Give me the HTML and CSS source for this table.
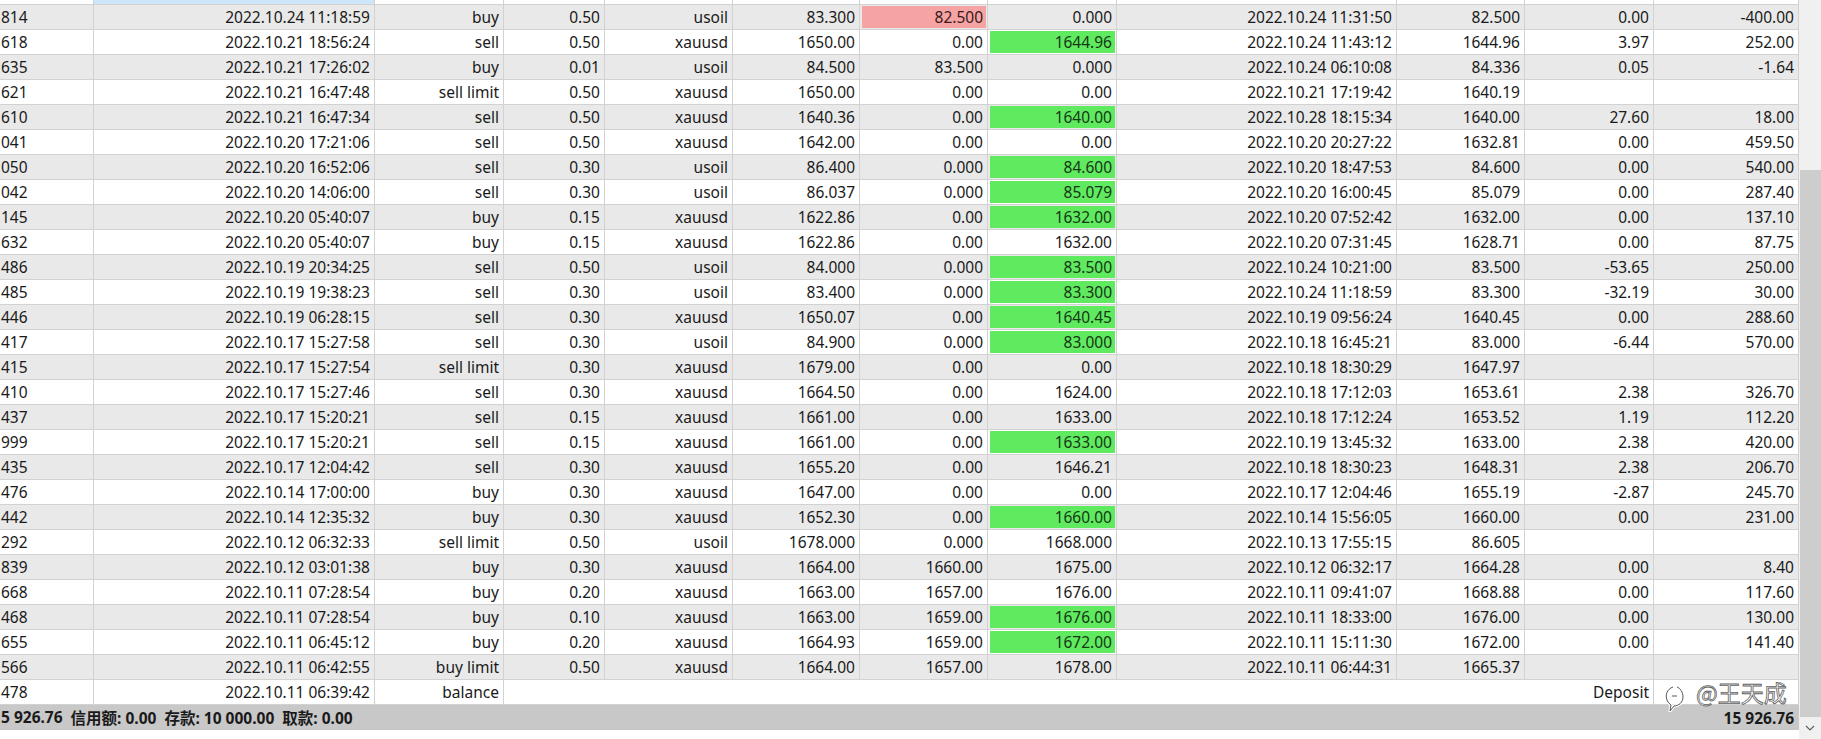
FILE: index.html
```html
<!DOCTYPE html>
<html>
<head>
<meta charset="utf-8">
<link rel="stylesheet" href="styles.css">
</head>
<body>
<div class="window">
  <div class="main">
    <div class="row head">
      <div class="c"></div><div class="c sel"></div><div class="c"></div><div class="c"></div><div class="c"></div><div class="c"></div><div class="c"></div><div class="c"></div><div class="c"></div><div class="c"></div><div class="c"></div><div class="c"></div>
    </div>
    <div class="row o"><div class="c t">814</div><div class="c">2022.10.24 11:18:59</div><div class="c">buy</div><div class="c">0.50</div><div class="c">usoil</div><div class="c">83.300</div><div class="c red">82.500</div><div class="c">0.000</div><div class="c">2022.10.24 11:31:50</div><div class="c">82.500</div><div class="c">0.00</div><div class="c">-400.00</div></div>
    <div class="row e"><div class="c t">618</div><div class="c">2022.10.21 18:56:24</div><div class="c">sell</div><div class="c">0.50</div><div class="c">xauusd</div><div class="c">1650.00</div><div class="c">0.00</div><div class="c grn">1644.96</div><div class="c">2022.10.24 11:43:12</div><div class="c">1644.96</div><div class="c">3.97</div><div class="c">252.00</div></div>
    <div class="row o"><div class="c t">635</div><div class="c">2022.10.21 17:26:02</div><div class="c">buy</div><div class="c">0.01</div><div class="c">usoil</div><div class="c">84.500</div><div class="c">83.500</div><div class="c">0.000</div><div class="c">2022.10.24 06:10:08</div><div class="c">84.336</div><div class="c">0.05</div><div class="c">-1.64</div></div>
    <div class="row e"><div class="c t">621</div><div class="c">2022.10.21 16:47:48</div><div class="c">sell limit</div><div class="c">0.50</div><div class="c">xauusd</div><div class="c">1650.00</div><div class="c">0.00</div><div class="c">0.00</div><div class="c">2022.10.21 17:19:42</div><div class="c">1640.19</div><div class="c"></div><div class="c"></div></div>
    <div class="row o"><div class="c t">610</div><div class="c">2022.10.21 16:47:34</div><div class="c">sell</div><div class="c">0.50</div><div class="c">xauusd</div><div class="c">1640.36</div><div class="c">0.00</div><div class="c grn">1640.00</div><div class="c">2022.10.28 18:15:34</div><div class="c">1640.00</div><div class="c">27.60</div><div class="c">18.00</div></div>
    <div class="row e"><div class="c t">041</div><div class="c">2022.10.20 17:21:06</div><div class="c">sell</div><div class="c">0.50</div><div class="c">xauusd</div><div class="c">1642.00</div><div class="c">0.00</div><div class="c">0.00</div><div class="c">2022.10.20 20:27:22</div><div class="c">1632.81</div><div class="c">0.00</div><div class="c">459.50</div></div>
    <div class="row o"><div class="c t">050</div><div class="c">2022.10.20 16:52:06</div><div class="c">sell</div><div class="c">0.30</div><div class="c">usoil</div><div class="c">86.400</div><div class="c">0.000</div><div class="c grn">84.600</div><div class="c">2022.10.20 18:47:53</div><div class="c">84.600</div><div class="c">0.00</div><div class="c">540.00</div></div>
    <div class="row e"><div class="c t">042</div><div class="c">2022.10.20 14:06:00</div><div class="c">sell</div><div class="c">0.30</div><div class="c">usoil</div><div class="c">86.037</div><div class="c">0.000</div><div class="c grn">85.079</div><div class="c">2022.10.20 16:00:45</div><div class="c">85.079</div><div class="c">0.00</div><div class="c">287.40</div></div>
    <div class="row o"><div class="c t">145</div><div class="c">2022.10.20 05:40:07</div><div class="c">buy</div><div class="c">0.15</div><div class="c">xauusd</div><div class="c">1622.86</div><div class="c">0.00</div><div class="c grn">1632.00</div><div class="c">2022.10.20 07:52:42</div><div class="c">1632.00</div><div class="c">0.00</div><div class="c">137.10</div></div>
    <div class="row e"><div class="c t">632</div><div class="c">2022.10.20 05:40:07</div><div class="c">buy</div><div class="c">0.15</div><div class="c">xauusd</div><div class="c">1622.86</div><div class="c">0.00</div><div class="c">1632.00</div><div class="c">2022.10.20 07:31:45</div><div class="c">1628.71</div><div class="c">0.00</div><div class="c">87.75</div></div>
    <div class="row o"><div class="c t">486</div><div class="c">2022.10.19 20:34:25</div><div class="c">sell</div><div class="c">0.50</div><div class="c">usoil</div><div class="c">84.000</div><div class="c">0.000</div><div class="c grn">83.500</div><div class="c">2022.10.24 10:21:00</div><div class="c">83.500</div><div class="c">-53.65</div><div class="c">250.00</div></div>
    <div class="row e"><div class="c t">485</div><div class="c">2022.10.19 19:38:23</div><div class="c">sell</div><div class="c">0.30</div><div class="c">usoil</div><div class="c">83.400</div><div class="c">0.000</div><div class="c grn">83.300</div><div class="c">2022.10.24 11:18:59</div><div class="c">83.300</div><div class="c">-32.19</div><div class="c">30.00</div></div>
    <div class="row o"><div class="c t">446</div><div class="c">2022.10.19 06:28:15</div><div class="c">sell</div><div class="c">0.30</div><div class="c">xauusd</div><div class="c">1650.07</div><div class="c">0.00</div><div class="c grn">1640.45</div><div class="c">2022.10.19 09:56:24</div><div class="c">1640.45</div><div class="c">0.00</div><div class="c">288.60</div></div>
    <div class="row e"><div class="c t">417</div><div class="c">2022.10.17 15:27:58</div><div class="c">sell</div><div class="c">0.30</div><div class="c">usoil</div><div class="c">84.900</div><div class="c">0.000</div><div class="c grn">83.000</div><div class="c">2022.10.18 16:45:21</div><div class="c">83.000</div><div class="c">-6.44</div><div class="c">570.00</div></div>
    <div class="row o"><div class="c t">415</div><div class="c">2022.10.17 15:27:54</div><div class="c">sell limit</div><div class="c">0.30</div><div class="c">xauusd</div><div class="c">1679.00</div><div class="c">0.00</div><div class="c">0.00</div><div class="c">2022.10.18 18:30:29</div><div class="c">1647.97</div><div class="c"></div><div class="c"></div></div>
    <div class="row e"><div class="c t">410</div><div class="c">2022.10.17 15:27:46</div><div class="c">sell</div><div class="c">0.30</div><div class="c">xauusd</div><div class="c">1664.50</div><div class="c">0.00</div><div class="c">1624.00</div><div class="c">2022.10.18 17:12:03</div><div class="c">1653.61</div><div class="c">2.38</div><div class="c">326.70</div></div>
    <div class="row o"><div class="c t">437</div><div class="c">2022.10.17 15:20:21</div><div class="c">sell</div><div class="c">0.15</div><div class="c">xauusd</div><div class="c">1661.00</div><div class="c">0.00</div><div class="c">1633.00</div><div class="c">2022.10.18 17:12:24</div><div class="c">1653.52</div><div class="c">1.19</div><div class="c">112.20</div></div>
    <div class="row e"><div class="c t">999</div><div class="c">2022.10.17 15:20:21</div><div class="c">sell</div><div class="c">0.15</div><div class="c">xauusd</div><div class="c">1661.00</div><div class="c">0.00</div><div class="c grn">1633.00</div><div class="c">2022.10.19 13:45:32</div><div class="c">1633.00</div><div class="c">2.38</div><div class="c">420.00</div></div>
    <div class="row o"><div class="c t">435</div><div class="c">2022.10.17 12:04:42</div><div class="c">sell</div><div class="c">0.30</div><div class="c">xauusd</div><div class="c">1655.20</div><div class="c">0.00</div><div class="c">1646.21</div><div class="c">2022.10.18 18:30:23</div><div class="c">1648.31</div><div class="c">2.38</div><div class="c">206.70</div></div>
    <div class="row e"><div class="c t">476</div><div class="c">2022.10.14 17:00:00</div><div class="c">buy</div><div class="c">0.30</div><div class="c">xauusd</div><div class="c">1647.00</div><div class="c">0.00</div><div class="c">0.00</div><div class="c">2022.10.17 12:04:46</div><div class="c">1655.19</div><div class="c">-2.87</div><div class="c">245.70</div></div>
    <div class="row o"><div class="c t">442</div><div class="c">2022.10.14 12:35:32</div><div class="c">buy</div><div class="c">0.30</div><div class="c">xauusd</div><div class="c">1652.30</div><div class="c">0.00</div><div class="c grn">1660.00</div><div class="c">2022.10.14 15:56:05</div><div class="c">1660.00</div><div class="c">0.00</div><div class="c">231.00</div></div>
    <div class="row e"><div class="c t">292</div><div class="c">2022.10.12 06:32:33</div><div class="c">sell limit</div><div class="c">0.50</div><div class="c">usoil</div><div class="c">1678.000</div><div class="c">0.000</div><div class="c">1668.000</div><div class="c">2022.10.13 17:55:15</div><div class="c">86.605</div><div class="c"></div><div class="c"></div></div>
    <div class="row o"><div class="c t">839</div><div class="c">2022.10.12 03:01:38</div><div class="c">buy</div><div class="c">0.30</div><div class="c">xauusd</div><div class="c">1664.00</div><div class="c">1660.00</div><div class="c">1675.00</div><div class="c">2022.10.12 06:32:17</div><div class="c">1664.28</div><div class="c">0.00</div><div class="c">8.40</div></div>
    <div class="row e"><div class="c t">668</div><div class="c">2022.10.11 07:28:54</div><div class="c">buy</div><div class="c">0.20</div><div class="c">xauusd</div><div class="c">1663.00</div><div class="c">1657.00</div><div class="c">1676.00</div><div class="c">2022.10.11 09:41:07</div><div class="c">1668.88</div><div class="c">0.00</div><div class="c">117.60</div></div>
    <div class="row o"><div class="c t">468</div><div class="c">2022.10.11 07:28:54</div><div class="c">buy</div><div class="c">0.10</div><div class="c">xauusd</div><div class="c">1663.00</div><div class="c">1659.00</div><div class="c grn">1676.00</div><div class="c">2022.10.11 18:33:00</div><div class="c">1676.00</div><div class="c">0.00</div><div class="c">130.00</div></div>
    <div class="row e"><div class="c t">655</div><div class="c">2022.10.11 06:45:12</div><div class="c">buy</div><div class="c">0.20</div><div class="c">xauusd</div><div class="c">1664.93</div><div class="c">1659.00</div><div class="c grn">1672.00</div><div class="c">2022.10.11 15:11:30</div><div class="c">1672.00</div><div class="c">0.00</div><div class="c">141.40</div></div>
    <div class="row o"><div class="c t">566</div><div class="c">2022.10.11 06:42:55</div><div class="c">buy limit</div><div class="c">0.50</div><div class="c">xauusd</div><div class="c">1664.00</div><div class="c">1657.00</div><div class="c">1678.00</div><div class="c">2022.10.11 06:44:31</div><div class="c">1665.37</div><div class="c"></div><div class="c"></div></div>
    <div class="row e"><div class="c t">478</div><div class="c">2022.10.11 06:39:42</div><div class="c">balance</div><div class="c span">Deposit</div><div class="c"></div></div>
    <div class="summary">
      <div class="sum-left"><span>5 926.76</span><span>信用额: 0.00</span><span>存款: 10 000.00</span><span>取款: 0.00</span></div>
      <div class="sum-right">15 926.76</div>
    </div>
  </div>
  <div class="scrollbar">
    <div class="track"></div>
    <div class="thumb"></div>
    <div class="arrow">
      <svg width="10" height="6" viewBox="0 0 10 6"><path d="M1 1 L5 5 L9 1" fill="none" stroke="#606060" stroke-width="1.2"/></svg>
    </div>
  </div>
  <div class="watermark">
    <svg class="wm-logo" width="22" height="28" viewBox="0 0 22 28">
      <path d="M9 3 C3 5 1 11 3 16 C4 19 6 20 7 21 L6 27 L10 22 C15 22 19 18 19 13 C19 8 16 4 13 3" fill="none" stroke="#fff" stroke-width="3"/>
      <path d="M9 3 C3 5 1 11 3 16 C4 19 6 20 7 21 L6 27 L10 22 C15 22 19 18 19 13 C19 8 16 4 13 3" fill="none" stroke="#555" stroke-width="1"/>
      <path d="M8 12 L13 12" stroke="#555" stroke-width="1"/>
    </svg>
    <span class="wm-text">@王天成</span>
  </div>
</div>
</body>
</html>
```

FILE: styles.css
```css
html, body {
  margin: 0;
  padding: 0;
  background: #ffffff;
  overflow: hidden;
}

.window {
  position: relative;
  display: flex;
  width: 1821px;
  height: 739px;
  font-family: "Noto Sans", "Open Sans", "Noto Sans CJK SC", sans-serif;
  font-size: 15.5px;
  color: #1a1a1a;
}

.main {
  width: 1799px;
  display: flex;
  flex-direction: column;
}

.row {
  display: grid;
  grid-template-columns: 94px 281px 129px 101px 128px 127px 128px 129px 280px 128px 129px 145px;
  height: 25px;
  box-sizing: border-box;
  border-bottom: 1px solid #d2d2d2;
  --bg: #ffffff;
  background: var(--bg);
}

.row.o { --bg: #e9e9e9; }
.row.e { --bg: #ffffff; }

.row.head {
  height: 5px;
  --bg: #ffffff;
}

.c {
  box-sizing: border-box;
  border-right: 1px solid #d2d2d2;
  padding-right: 4px;
  text-align: right;
  line-height: 24px;
  white-space: nowrap;
  overflow: hidden;
}

.c.t {
  text-align: left;
  padding-left: 1px;
}

.c.sel {
  background: #cde6fa;
}

.c.span {
  grid-column: span 8;
}

.c.grn {
  background: #60ea60;
  box-shadow: inset 2px 1px 0 0 var(--bg), inset -1px -1px 0 0 var(--bg);
  color: #163816;
}

.c.red {
  background: #f5a3a3;
  box-shadow: inset 2px 1px 0 0 var(--bg), inset -1px -1px 0 0 var(--bg);
  color: #3a1a1a;
}

.summary {
  display: flex;
  justify-content: space-between;
  align-items: center;
  height: 25px;
  background: #c8c8c8;
  font-weight: 700;
  color: #1a1a1a;
  padding: 0 5px 0 1px;
}

.sum-left {
  display: flex;
  gap: 8px;
}

.scrollbar {
  width: 22px;
  height: 739px;
  background: #f0f0f0;
  display: flex;
  flex-direction: column;
}

.track {
  height: 170px;
}

.thumb {
  height: 547px;
  margin-left: 1px;
  background: #cdcdcd;
}

.arrow {
  flex: 1;
  display: flex;
  align-items: center;
  justify-content: center;
}

.watermark {
  position: absolute;
  left: 1664px;
  top: 681px;
  display: flex;
  align-items: flex-start;
  gap: 10px;
  pointer-events: none;
}

.wm-logo {
  margin-top: 3px;
}

.wm-text {
  font-family: "Noto Sans CJK SC", sans-serif;
  font-size: 23px;
  line-height: 22px;
  height: 22px;
  color: #ffffff;
  -webkit-text-stroke: 0.8px #606060;
  letter-spacing: 0;
}
```
